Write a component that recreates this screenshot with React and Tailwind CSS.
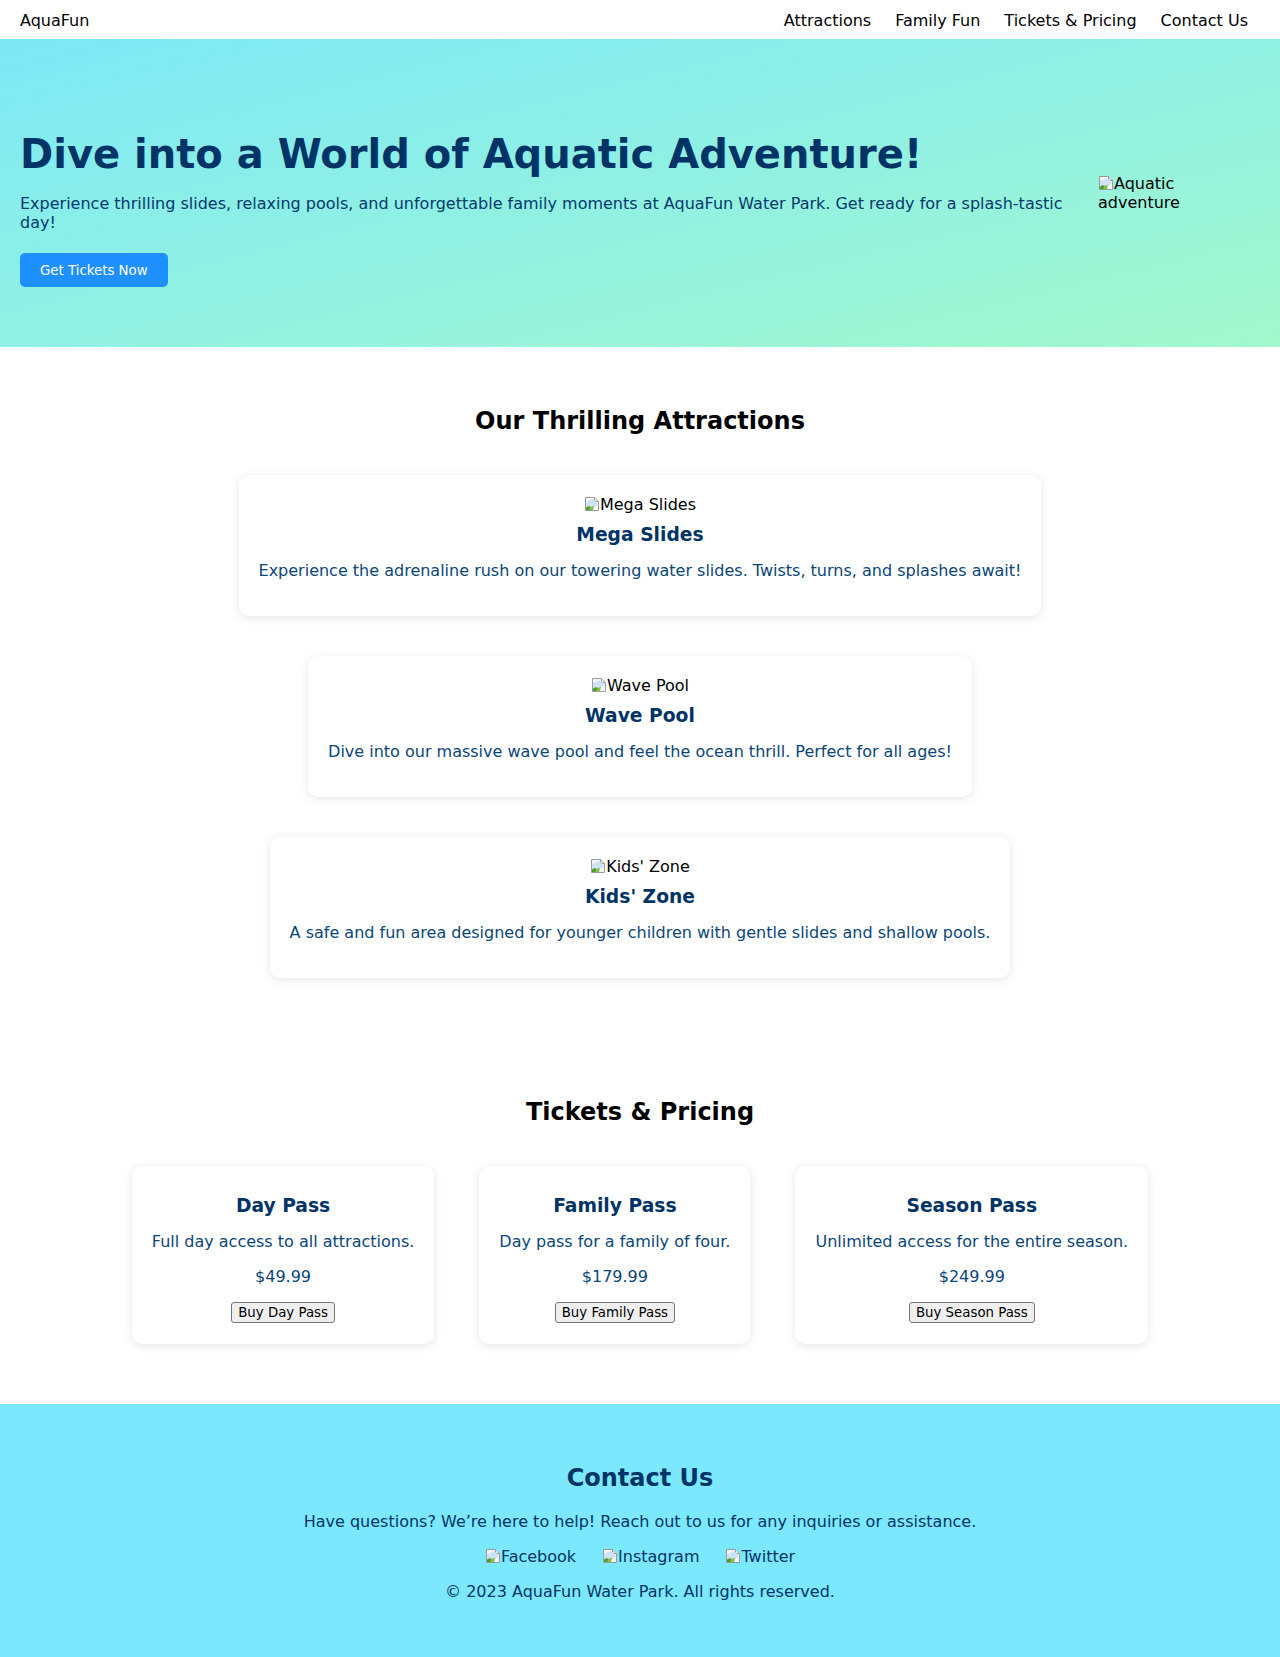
import React from "react";

function BrokenIcon() {
  return (
    <svg
      width="16"
      height="16"
      viewBox="0 0 16 16"
      className="inline-block align-top mt-[1px]"
      aria-hidden="true"
    >
      <path d="M1.5 1.5H10.5L14.5 5.5V14.5H1.5Z" fill="#f4f6f8" stroke="#9a9a9a" />
      <path d="M10.5 1.5V5.5H14.5" fill="#e2e2e2" stroke="#9a9a9a" />
      <path d="M2 6L9 3L13.5 7V9L7 12L2 10Z" fill="#cfe3f4" />
      <path d="M2 14V11.5Q4.5 9.5 7 11L5.5 14Z" fill="#4f9e2f" />
      <path d="M7 11L10 9.5L9 14H5.5Z" fill="#7cc04a" />
    </svg>
  );
}

function Alt({ children, className = "" }) {
  return (
    <span className={"text-black " + className}>
      <BrokenIcon />
      {children}
    </span>
  );
}

const attractions = [
  {
    name: "Mega Slides",
    desc: "Experience the adrenaline rush on our towering water slides. Twists, turns, and splashes await!",
  },
  {
    name: "Wave Pool",
    desc: "Dive into our massive wave pool and feel the ocean thrill. Perfect for all ages!",
  },
  {
    name: "Kids' Zone",
    desc: "A safe and fun area designed for younger children with gentle slides and shallow pools.",
  },
];

const passes = [
  { name: "Day Pass", desc: "Full day access to all attractions.", price: "$49.99", btn: "Buy Day Pass" },
  { name: "Family Pass", desc: "Day pass for a family of four.", price: "$179.99", btn: "Buy Family Pass" },
  { name: "Season Pass", desc: "Unlimited access for the entire season.", price: "$249.99", btn: "Buy Season Pass" },
];

export default function App() {
  return (
    <div className="font-['DejaVu_Sans',sans-serif] text-base leading-[19px] bg-white">
      {/* Nav */}
      <nav className="h-[39px] pt-[1px] flex items-center justify-between px-5 bg-white text-black">
        <div>AquaFun</div>
        <ul className="flex">
          <li className="mx-3">Attractions</li>
          <li className="mx-3">Family Fun</li>
          <li className="mx-3">Tickets &amp; Pricing</li>
          <li className="mx-3">Contact Us</li>
        </ul>
      </nav>

      {/* Hero */}
      <section className="h-[308px] flex items-start pt-[92px] px-5 bg-linear-to-br from-[#7de8f5] to-[#a3f8cd]">
        <div className="flex-1">
          <h1 className="text-[40px] font-bold leading-[46px] text-[#003366]">
            Dive into a World of Aquatic Adventure!
          </h1>
          <p className="mt-[17px] leading-[19px] text-[#06396b]">
            Experience thrilling slides, relaxing pools, and unforgettable family moments at AquaFun Water Park. Get ready for a splash-tastic day!
          </p>
          <div className="mt-[21px]">
            <button className="bg-[#1e90ff] text-white text-[13.33px] leading-[15px] px-5 py-[9.5px] rounded-[5px]">
              Get Tickets Now
            </button>
          </div>
        </div>
        <div className="w-[162px] ml-5 mt-[43px] leading-[19px]">
          <Alt>Aquatic adventure</Alt>
        </div>
      </section>

      {/* Attractions */}
      <section className="py-10">
        <h2 className="mt-[19.92px] text-2xl leading-[28px] font-bold text-center text-black">
          Our Thrilling Attractions
        </h2>
        <div className="mt-[19.92px] flex flex-col items-center">
          {attractions.map((a) => (
            <div
              key={a.name}
              className="my-5 p-5 bg-white rounded-[10px] shadow-[0_2px_10px_rgba(0,0,0,0.1)] text-center"
            >
              <div className="leading-[20px]">
                <Alt>{a.name}</Alt>
              </div>
              <h3 className="mt-[9px] text-[18.72px] leading-[21px] font-bold text-[#003366]">
                {a.name}
              </h3>
              <p className="mt-4 mb-4 leading-[19px] text-[#0a4677]">{a.desc}</p>
            </div>
          ))}
        </div>
      </section>

      {/* Tickets */}
      <section className="py-10">
        <h2 className="mt-[19.92px] text-2xl leading-[28px] font-bold text-center text-black">
          Tickets &amp; Pricing
        </h2>
        <div className="mt-[19.92px] flex justify-center gap-[45px]">
          {passes.map((p) => (
            <div
              key={p.name}
              className="my-5 px-5 pt-5 pb-[21px] bg-white rounded-[10px] shadow-[0_2px_10px_rgba(0,0,0,0.1)] text-center"
            >
              <h3 className="mt-[9.36px] text-[18.72px] leading-[21px] font-bold text-[#003366]">
                {p.name}
              </h3>
              <p className="mt-4 leading-[19px] text-[#0a4677]">{p.desc}</p>
              <p className="mt-4 leading-[19px] text-[#0a4677]">{p.price}</p>
              <div className="mt-4 leading-none">
                <button className="inline-block h-[21px] px-[6px] bg-[#efefef] border border-[#767676] rounded-[3px] text-[13.33px] leading-[15px] text-black">
                  {p.btn}
                </button>
              </div>
            </div>
          ))}
        </div>
      </section>

      {/* Contact */}
      <section className="py-10 bg-[#7ce8fe] text-center text-[#003366]">
        <h2 className="mt-[19.92px] text-2xl leading-[28px] font-bold">Contact Us</h2>
        <p className="mt-[19.92px] leading-[19px]">
          Have questions? We’re here to help! Reach out to us for any inquiries or assistance.
        </p>
        <div className="mt-4 leading-[19px] flex justify-center gap-[26px]">
          <span className="text-[#003366]"><BrokenIcon />Facebook</span>
          <span className="text-[#003366]"><BrokenIcon />Instagram</span>
          <span className="text-[#003366]"><BrokenIcon />Twitter</span>
        </div>
        <p className="mt-4 mb-4 leading-[19px]">© 2023 AquaFun Water Park. All rights reserved.</p>
      </section>
    </div>
  );
}
